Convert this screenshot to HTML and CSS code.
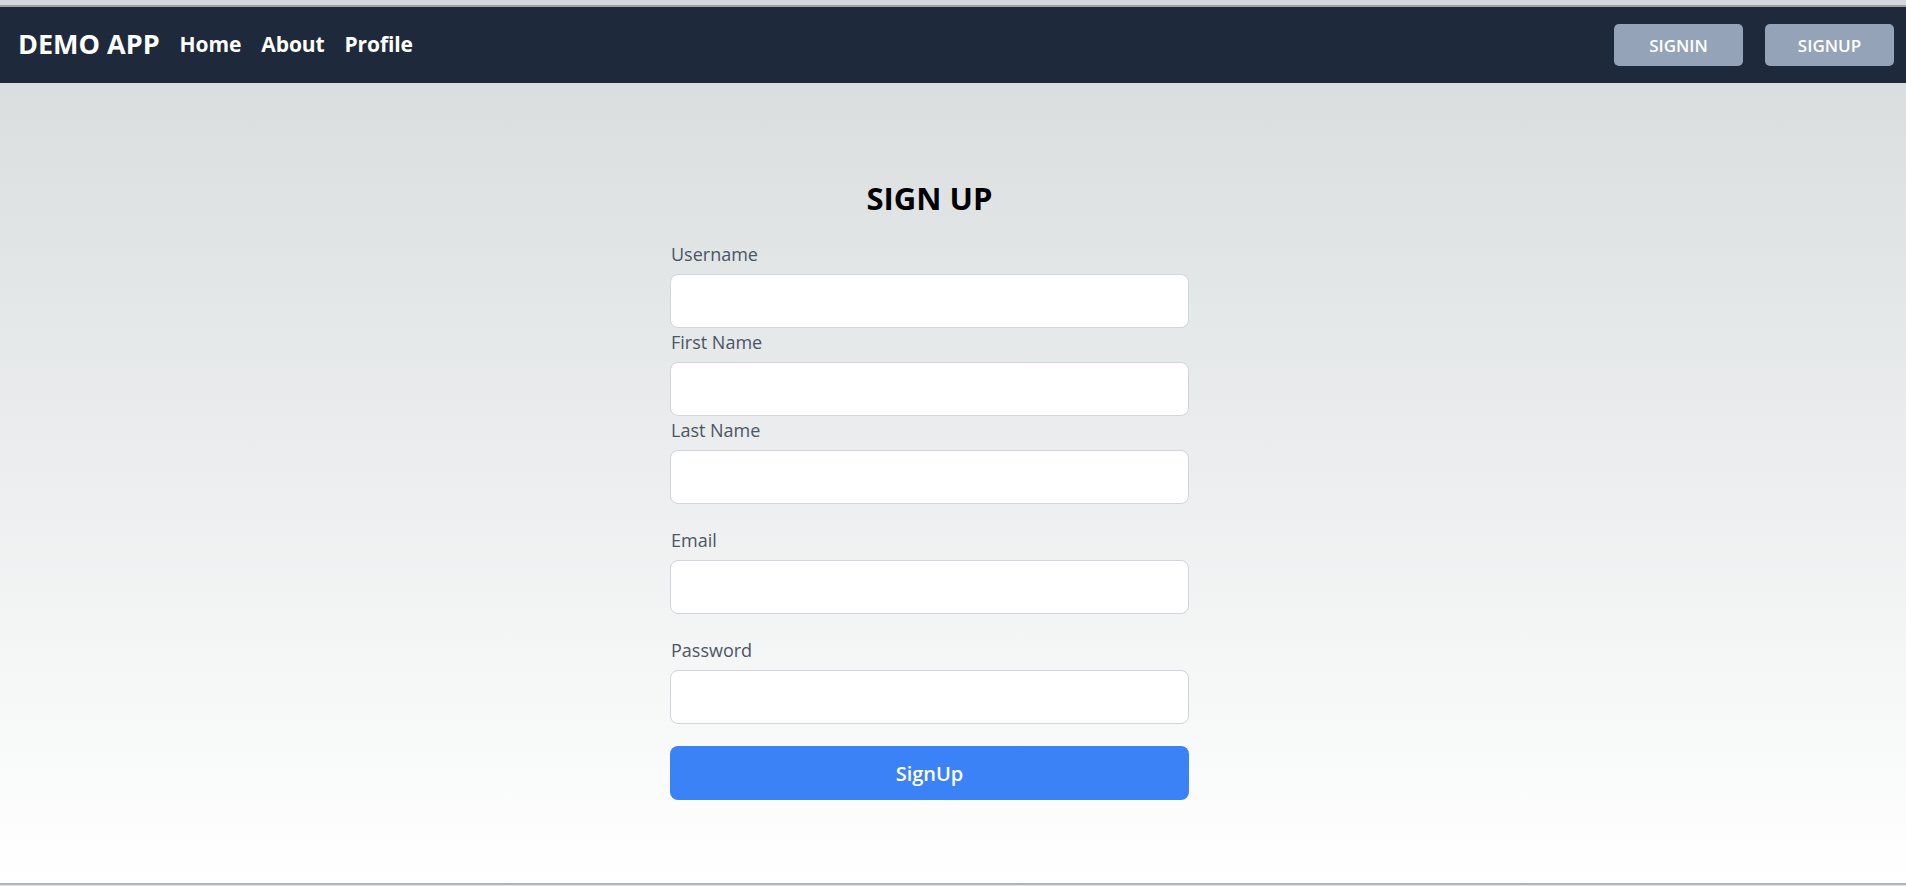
FILE: index.html
```html
<!DOCTYPE html>
<html lang="en">
<head>
  <meta charset="UTF-8" />
  <meta name="viewport" content="width=device-width, initial-scale=1.0" />
  <title>Demo App - Sign Up</title>
  <link rel="stylesheet" href="styles.css">
</head>
<body>
  <div class="topstrip"></div>

  <nav class="navbar">
    <div class="nav-left">
      <a class="brand" href="#">DEMO APP</a>
      <a class="nav-link" href="#">Home</a>
      <a class="nav-link" href="#">About</a>
      <a class="nav-link" href="#">Profile</a>
    </div>
    <div class="nav-right">
      <button class="nav-btn" type="button">SIGNIN</button>
      <button class="nav-btn" type="button">SIGNUP</button>
    </div>
  </nav>

  <main class="page">
    <form class="signup" id="signupForm">
      <h1 class="signup-title">SIGN UP</h1>

      <div class="field">
        <label for="username">Username</label>
        <input type="text" id="username" name="username" />
      </div>
      <div class="field">
        <label for="firstName">First Name</label>
        <input type="text" id="firstName" name="firstName" />
      </div>
      <div class="field">
        <label for="lastName">Last Name</label>
        <input type="text" id="lastName" name="lastName" />
      </div>
      <div class="field field-spaced">
        <label for="email">Email</label>
        <input type="email" id="email" name="email" />
      </div>
      <div class="field field-spaced">
        <label for="password">Password</label>
        <input type="password" id="password" name="password" />
      </div>

      <button class="submit-btn" type="submit">SignUp</button>
    </form>
  </main>

  <footer class="footer"></footer>
</body>
</html>
```

FILE: styles.css
```css
body {
  margin: 0;
  font-family: "Open Sans", "Noto Sans", sans-serif;
  color: #111;
  overflow: hidden;
}

.topstrip {
  height: 5px;
  background-color: #d6d7db;
  border-bottom: 2px solid #a0a1a5;
}

/* Navbar */
.navbar {
  height: 76px;
  background-color: #1e293b;
  display: flex;
  align-items: center;
  justify-content: space-between;
  padding: 0 12px 0 18px;
}

.nav-left {
  display: flex;
  align-items: center;
  gap: 20px;
  padding-bottom: 3px;
}

.brand {
  color: #fff;
  font-size: 27px;
  font-weight: 700;
  text-decoration: none;
}

.nav-link {
  color: #fff;
  font-size: 21px;
  font-weight: 700;
  text-decoration: none;
  letter-spacing: -0.1px;
}

.nav-right {
  display: flex;
  gap: 22px;
}

.nav-btn {
  width: 129px;
  height: 42px;
  background-color: #94a3b8;
  color: #fff;
  border: none;
  border-radius: 5px;
  font-family: inherit;
  font-size: 17px;
  font-weight: 600;
  cursor: pointer;
}

/* Page */
.page {
  height: 800px;
  background: linear-gradient(to bottom, #dadedf, #ffffff);
  box-sizing: border-box;
  padding-top: 97px;
}

.signup {
  width: 519px;
  margin-left: 670px;
  display: flex;
  flex-direction: column;
}

.signup-title {
  margin: 0 0 24px;
  font-size: 31px;
  line-height: 36px;
  font-weight: 700;
  text-align: center;
  color: #000;
}

.field {
  display: flex;
  flex-direction: column;
}

.field-spaced {
  margin-top: 22px;
}

.field label {
  font-size: 18px;
  line-height: 28px;
  color: #4b5563;
  margin-bottom: 6px;
  padding-left: 1px;
}

.field input {
  height: 54px;
  box-sizing: border-box;
  border: 1px solid #d1d5db;
  border-radius: 8px;
  background-color: #fff;
  padding: 0 12px;
  font-family: inherit;
  font-size: 16px;
  outline: none;
}

.field input:focus {
  border-color: #3b82f6;
}

.submit-btn {
  margin-top: 22px;
  height: 54px;
  background-color: #3b82f6;
  color: #fff;
  border: none;
  border-radius: 8px;
  font-family: inherit;
  font-size: 20px;
  font-weight: 600;
  cursor: pointer;
}

.footer {
  height: 3px;
  border-top: 2px solid #a9b4c2;
  background-color: #dfe5ec;
}
```
